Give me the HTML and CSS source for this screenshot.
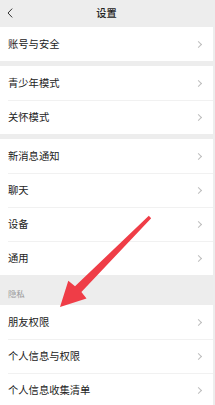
FILE: index.html
```html
<!DOCTYPE html>
<html lang="zh-CN">
<head>
<meta charset="utf-8">
<title>设置</title>
<link rel="stylesheet" href="styles.css">
</head>
<body>
<div class="page">
  <header class="topbar">
    <svg class="back" width="6" height="10" viewBox="0 0 6 10"><path d="M5.2 0.6 L1 5 L5.2 9.4" fill="none" stroke="#333" stroke-width="1"/></svg>
    <h1 class="title">设置</h1>
  </header>

  <section class="group">
    <div class="row"><div class="row-inner"><span class="label">账号与安全</span><span class="chev"></span></div></div>
  </section>

  <section class="group">
    <div class="row"><div class="row-inner"><span class="label">青少年模式</span><span class="chev"></span></div></div>
    <div class="row"><div class="row-inner"><span class="label">关怀模式</span><span class="chev"></span></div></div>
  </section>

  <section class="group">
    <div class="row"><div class="row-inner"><span class="label">新消息通知</span><span class="chev"></span></div></div>
    <div class="row"><div class="row-inner"><span class="label">聊天</span><span class="chev"></span></div></div>
    <div class="row"><div class="row-inner"><span class="label">设备</span><span class="chev"></span></div></div>
    <div class="row"><div class="row-inner"><span class="label">通用</span><span class="chev"></span></div></div>
  </section>

  <div class="section-title">隐私</div>

  <section class="group group-flush">
    <div class="row"><div class="row-inner"><span class="label">朋友权限</span><span class="chev"></span></div></div>
    <div class="row"><div class="row-inner"><span class="label">个人信息与权限</span><span class="chev"></span></div></div>
    <div class="row"><div class="row-inner"><span class="label">个人信息收集清单</span><span class="chev"></span></div></div>
    <div class="row"><div class="row-inner row-end"></div></div>
  </section>
</div>

<svg class="arrow" width="215" height="405" viewBox="0 0 215 405">
  <polygon fill="#ef3d47" points="148.8,215.8 151.2,218.2 81.4,292 86.5,298.6 60,307 68.3,280.8 75,286.3"/>
</svg>
</body>
</html>
```

FILE: styles.css
```css
* { box-sizing: border-box; margin: 0; padding: 0; }

html, body {
  width: 215px;
  height: 405px;
  overflow: hidden;
}

body {
  background: #ededed;
  font-family: "Noto Sans CJK SC", "Noto Sans", sans-serif;
  color: #222;
  position: relative;
}

.page {
  width: 213px;
  display: flex;
  flex-direction: column;
}

.topbar {
  height: 27px;
  background: #ededed;
  display: flex;
  align-items: center;
  justify-content: center;
  position: relative;
}

.back {
  position: absolute;
  left: 7px;
  top: 8px;
}

.title {
  font-size: 10.2px;
  font-weight: 500;
  color: #222;
  line-height: 1;
}

.group {
  background: #fff;
  margin-bottom: 5px;
}

.group-flush { margin-bottom: 0; }

.row {
  padding-left: 8px;
}

.row-inner {
  height: 34px;
  display: flex;
  align-items: center;
  justify-content: space-between;
  padding-right: 11px;
}

.row + .row .row-inner {
  border-top: 1px solid #f1f1f1;
}

.row + .row .row-end {
  height: 6px;
}

.label {
  font-size: 10.3px;
  line-height: 1;
  color: #222;
}

.chev {
  width: 5px;
  height: 5px;
  border-top: 1px solid #bdbdbd;
  border-right: 1px solid #bdbdbd;
  transform: rotate(45deg);
  margin-right: 1px;
}

.section-title {
  height: 25px;
  padding-left: 8px;
  display: flex;
  align-items: center;
  font-size: 8.4px;
  color: #9a9a9a;
  background: #ededed;
}

.arrow {
  position: absolute;
  left: 0;
  top: 0;
  pointer-events: none;
}
```
